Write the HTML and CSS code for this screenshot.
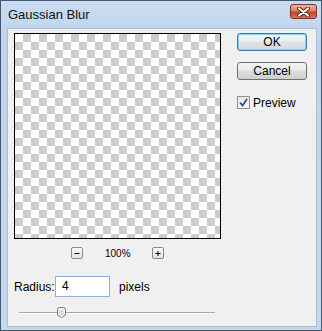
FILE: index.html
```html
<!DOCTYPE html>
<html>
<head>
	<title>Gaussian Blur</title>
	<link rel="stylesheet" href="styles.css">
</head>
<body>
<div class="window">
	<div class="titlebar">
		<span class="title">Gaussian Blur</span>
		<span class="close">
			<svg width="13" height="10" viewBox="0 0 13 10">
				<path d="M2 1.5 L11 8.5 M11 1.5 L2 8.5" stroke="#5a2418" stroke-width="4" stroke-linecap="round"/>
				<path d="M2 1.5 L11 8.5 M11 1.5 L2 8.5" stroke="#fff" stroke-width="2.2" stroke-linecap="round"/>
			</svg>
		</span>
	</div>
	<div class="client">
		<div class="top">
			<div class="preview-col">
				<div class="preview"></div>
				<div class="zoom">
					<span class="zbtn"><svg width="10" height="10" viewBox="0 0 10 10"><path d="M2.5 5.5 H7.5" stroke="#000" stroke-width="1"/></svg></span>
					<span class="pct">100%</span>
					<span class="zbtn"><svg width="10" height="10" viewBox="0 0 10 10"><path d="M2.5 5.5 H7.5 M5 3 V8" stroke="#000" stroke-width="1"/></svg></span>
				</div>
			</div>
			<div class="buttons">
				<div class="btn default">OK</div>
				<div class="btn">Cancel</div>
				<div class="check">
					<span class="box">
						<svg width="9" height="9" viewBox="0 0 9 9"><path d="M1 4.5 L3.5 7.5 L8 1" fill="none" stroke="#3b3f9e" stroke-width="1.8"/></svg>
					</span>
					<span>Preview</span>
				</div>
			</div>
		</div>
		<div class="radius">
			<span class="label">Radius:</span>
			<span class="field">4</span>
			<span class="unit">pixels</span>
		</div>
		<div class="slider">
			<div class="track"></div>
			<svg class="thumb" width="9" height="11" viewBox="0 0 9 11">
				<path d="M0.5 2.5 Q0.5 0.5 2.5 0.5 H6.5 Q8.5 0.5 8.5 2.5 V8 L4.5 10.5 L0.5 8 Z" fill="#f4f4f4" stroke="#7a7a7a"/>
				<path d="M3 3 V8 M4.5 3 V8 M6 3 V8" stroke="#c8c8c8" stroke-width="0.8"/>
			</svg>
		</div>
	</div>
</div>
</body>
</html>
```
FILE: styles.css
```css
*{
	padding: 0;
	margin: 0;
	box-sizing: border-box;
}
body{
	font-family: "Liberation Sans", Arial, sans-serif;
	font-size: 12px;
	color: #000;
	background: #fff;
}
.window{
	width: 322px;
	height: 331px;
	border: 1px solid #44596f;
	background: linear-gradient(#c9dbf0, #bfd4ec 40px, #c4d8ee);
	padding: 0 4px 3px 6px;
	display: flex;
	flex-direction: column;
}
.titlebar{
	height: 27px;
	display: flex;
	align-items: center;
	justify-content: space-between;
	padding-left: 1px;
}
.title{
	font-size: 13px;
	color: #111;
}
.close{
	width: 27px;
	height: 15px;
	margin-top: -6px;
	border: 1px solid #7a3325;
	border-radius: 3px;
	background: linear-gradient(#eeb3a3, #d9826b 45%, #c5432a 55%, #d8705a);
	display: flex;
	align-items: center;
	justify-content: center;
}
.client{
	flex: 1;
	background: #f0f0f0;
	border: 1px solid #a9bed6;
	padding: 4px 0 0 6px;
}
.top{
	display: flex;
}
.preview-col{
	width: 207px;
}
.preview{
	width: 207px;
	height: 206px;
	border: 1px solid #000;
	background-color: #fff;
	background-image: conic-gradient(#cccccc 25%, #ffffff 0 50%, #cccccc 0 75%, #ffffff 0);
	background-size: 16px 16px;
}
.zoom{
	margin-top: 8px;
	display: flex;
	justify-content: center;
	align-items: center;
	gap: 22px;
	height: 12px;
}
.zbtn{
	width: 12px;
	height: 12px;
	border: 1px solid #8a8a8a;
	border-radius: 2px;
	background: linear-gradient(#fafafa, #e2e2e2);
	display: flex;
	align-items: center;
	justify-content: center;
}
.pct{
	font-size: 10px;
	width: 25px;
	text-align: center;
}
.buttons{
	margin-left: 16px;
	width: 70px;
}
.btn{
	height: 18px;
	border: 1px solid #707070;
	border-radius: 3px;
	background: linear-gradient(#f3f3f3, #ebebeb 45%, #dddddd 50%, #cfcfcf);
	text-align: center;
	line-height: 16px;
	font-size: 12px;
}
.btn.default{
	border-color: #3c7fb1;
	box-shadow: inset 0 0 0 1px #7fd2f2;
	background: linear-gradient(#f4f6f7, #eceeef 45%, #e0e3e5 50%, #d6dadd);
}
.btn + .btn{
	margin-top: 11px;
}
.check{
	margin-top: 16px;
	display: flex;
	align-items: center;
	gap: 3px;
	height: 13px;
}
.box{
	width: 13px;
	height: 13px;
	border: 1px solid #8e8f8f;
	background: linear-gradient(#e6e6e6, #ffffff);
	display: flex;
	align-items: center;
	justify-content: center;
}
.radius{
	margin-top: 17px;
	display: flex;
	align-items: center;
	height: 21px;
}
.label{
	width: 41px;
}
.field{
	width: 55px;
	height: 21px;
	border: 1px solid #8fb1d6;
	background: #fff;
	padding-left: 6px;
	line-height: 19px;
}
.unit{
	margin-left: 9px;
}
.slider{
	position: relative;
	margin-top: 10px;
	margin-left: 5px;
	width: 196px;
	height: 11px;
}
.track{
	position: relative;
	top: 5px;
	height: 2px;
	border-top: 1px solid #a8a8a8;
	border-bottom: 1px solid #ffffff;
}
.thumb{
	position: absolute;
	left: 38px;
	top: 0;
}
```
